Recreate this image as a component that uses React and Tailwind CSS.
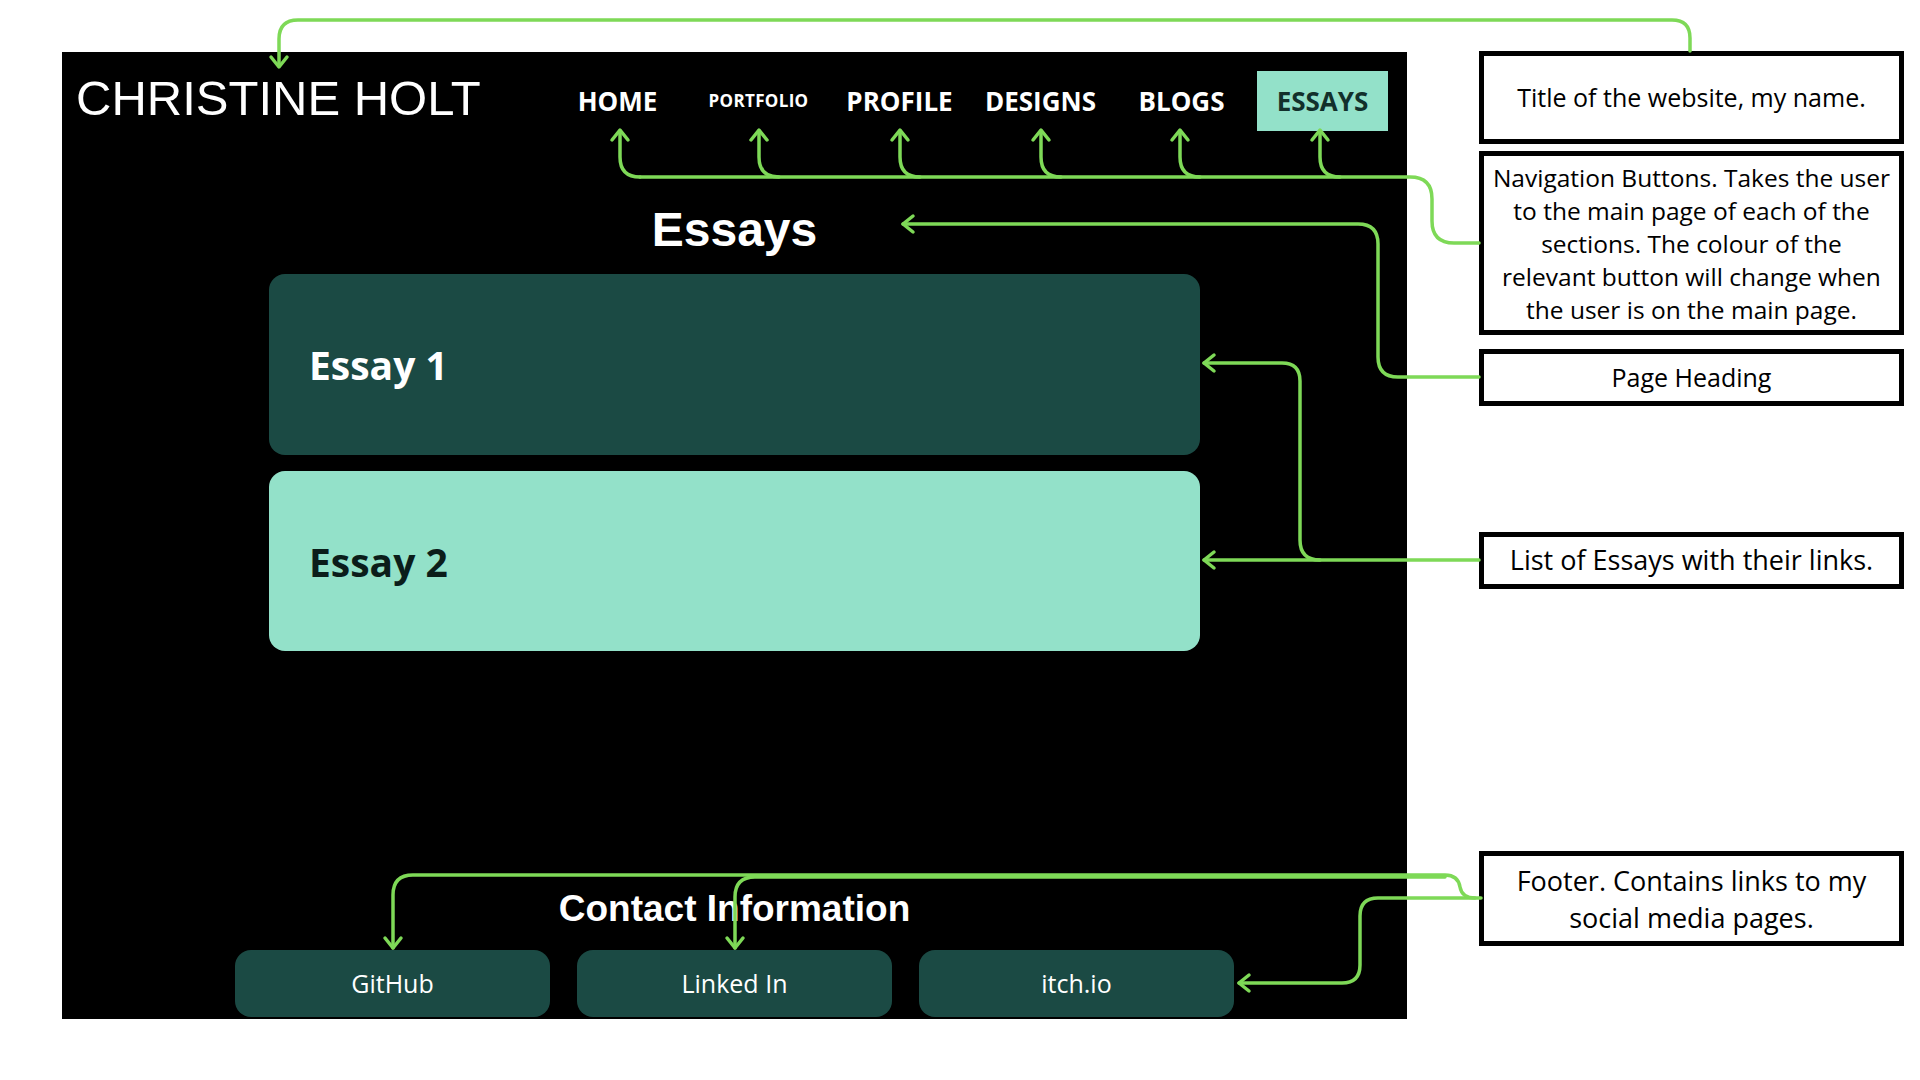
import React from 'react';

const navItems = ['HOME', 'PORTFOLIO', 'PROFILE', 'DESIGNS', 'BLOGS', 'ESSAYS'];

// green annotation lines, drawn over the whole canvas
const lines = [
  // title
  'M 1690 51 L 1690 38 Q 1690 20 1672 20 L 298 20 Q 279 20 279 39 L 279 66',
  // nav buttons
  'M 620 131 L 620 157 Q 620 177 640 177',
  'M 759 131 L 759 157 Q 759 177 779 177',
  'M 900 131 L 900 157 Q 900 177 920 177',
  'M 1041 131 L 1041 157 Q 1041 177 1061 177',
  'M 1180 131 L 1180 157 Q 1180 177 1200 177',
  'M 1320 131 L 1320 157 Q 1320 177 1340 177',
  'M 640 177 L 1410 177 Q 1432 177 1432 199 L 1432 221 Q 1432 243 1454 243 L 1479 243',
  // page heading
  'M 903 224 L 1358 224 Q 1378 224 1378 244 L 1378 357 Q 1378 377 1398 377 L 1479 377',
  // essays
  'M 1204 363 L 1282 363 Q 1300 363 1300 381 L 1300 540 Q 1300 560 1320 560',
  'M 1204 560 L 1479 560',
  // footer
  'M 1239 983 L 1342 983 Q 1360 983 1360 965 L 1360 916 Q 1360 898 1378 898 L 1481 898',
  'M 393 948 L 393 895 Q 393 875 413 875 L 1445 875 Q 1458 875 1460 887 Q 1462 898 1475 898',
  'M 735 948 L 735 897 Q 735 877 755 877 L 1445 877',
];

const heads = [
  'M 271 57 L 279 67 L 287 57',
  'M 612 140 L 620 130 L 628 140',
  'M 751 140 L 759 130 L 767 140',
  'M 892 140 L 900 130 L 908 140',
  'M 1033 140 L 1041 130 L 1049 140',
  'M 1172 140 L 1180 130 L 1188 140',
  'M 1312 140 L 1320 130 L 1328 140',
  'M 913 216 L 903 224 L 913 232',
  'M 1214 355 L 1204 363 L 1214 371',
  'M 1214 552 L 1204 560 L 1214 568',
  'M 1249 975 L 1239 983 L 1249 991',
  'M 385 938 L 393 948 L 401 938',
  'M 727 938 L 735 948 L 743 938',
];

const Note = ({ className, children }) => (
  <div
    className={`border-[5px] border-black flex items-center justify-center text-center text-black whitespace-nowrap font-['Open_Sans',sans-serif] ${className}`}
  >
    {children}
  </div>
);

export default function App() {
  return (
    <div className="relative w-[1920px] h-[1080px] bg-white overflow-hidden flex items-start">
      {/* the page mockup */}
      <div className="ml-[62px] mt-[52px] w-[1345px] h-[967px] bg-black flex flex-col">
        <header className="mt-[19px] h-[60px] flex items-center justify-between px-[14px]">
          <h1 className="mb-[6px] text-white text-[49px] leading-none font-['Liberation_Sans',Arial,sans-serif]">
            CHRISTINE HOLT
          </h1>
          <nav className="grid grid-cols-6 w-[846px] font-['Open_Sans',sans-serif] font-bold">
            {navItems.map((item) =>
              item === 'ESSAYS' ? (
                <div key={item} className="flex justify-center">
                  <span className="w-[131px] h-[60px] bg-[#93e1c9] text-[#12302b] text-[26px] flex items-center justify-center">
                    {item}
                  </span>
                </div>
              ) : (
                <span
                  key={item}
                  className={`h-[60px] flex items-center justify-center text-white ${
                    item === 'PORTFOLIO' ? 'text-[17px] tracking-[0.02em]' : 'text-[26px]'
                  }`}
                >
                  {item}
                </span>
              )
            )}
          </nav>
        </header>

        <h2 className="mt-[75px] text-center text-white text-[48px] leading-none font-bold font-['Liberation_Sans',Arial,sans-serif]">
          Essays
        </h2>

        <div className="mt-[20px] w-[931px] mx-auto flex flex-col gap-[16px] font-['Open_Sans',sans-serif] font-bold text-[39px] leading-none">
          <div className="h-[181px] rounded-[16px] bg-[#1b4a44] text-white flex items-center px-[40px]">
            Essay 1
          </div>
          <div className="h-[180px] rounded-[16px] bg-[#93e1c9] text-[#0b1d1a] flex items-center px-[40px]">
            Essay 2
          </div>
        </div>

        <footer className="mt-auto pb-[2px] flex flex-col items-center">
          <h3 className="text-white text-[37px] leading-none font-bold font-['Liberation_Sans',Arial,sans-serif]">
            Contact Information
          </h3>
          <div className="mt-[23px] flex gap-[27px] font-['Open_Sans',sans-serif] text-[25px] text-white">
            {['GitHub', 'Linked In', 'itch.io'].map((link) => (
              <div
                key={link}
                className="w-[315px] h-[67px] rounded-[16px] bg-[#1b4a44] flex items-center justify-center"
              >
                {link}
              </div>
            ))}
          </div>
        </footer>
      </div>

      {/* annotation notes */}
      <div className="ml-[72px] w-[425px] flex flex-col">
        <Note className="mt-[51px] h-[93px] text-[25px]">Title of the website, my name.</Note>
        <Note className="mt-[7px] h-[184px] text-[24.5px] leading-[33px]">
          Navigation Buttons. Takes the user
          <br />
          to the main page of each of the
          <br />
          sections. The colour of the
          <br />
          relevant button will change when
          <br />
          the user is on the main page.
        </Note>
        <Note className="mt-[14px] h-[57px] text-[25px]">Page Heading</Note>
        <Note className="mt-[126px] h-[57px] text-[27px]">List of Essays with their links.</Note>
        <Note className="mt-[262px] h-[95px] text-[27px] leading-[37px]">
          Footer. Contains links to my
          <br />
          social media pages.
        </Note>
      </div>

      <svg
        className="absolute inset-0 pointer-events-none"
        width="1920"
        height="1080"
        viewBox="0 0 1920 1080"
        fill="none"
        stroke="#7ed957"
        strokeWidth="3.5"
        strokeLinecap="round"
        strokeLinejoin="round"
      >
        {lines.map((d, i) => (
          <path key={i} d={d} />
        ))}
        {heads.map((d, i) => (
          <path key={`h${i}`} d={d} />
        ))}
      </svg>
    </div>
  );
}
